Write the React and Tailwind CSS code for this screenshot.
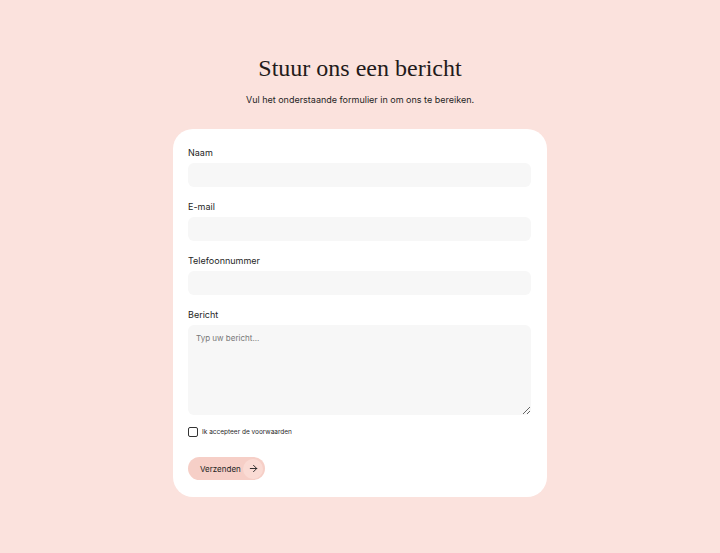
import React from "react";

const Field = ({ label, children }) => (
  <div className="flex flex-col gap-[4px]">
    <label className="text-[9px] leading-[12px] text-[#1f1f1f]">{label}</label>
    {children}
  </div>
);

export default function App() {
  return (
    <div
      className="min-h-[553px] w-full bg-[#fbe2dd] flex flex-col items-center pt-[52px]"
      style={{ fontFamily: "Inter, 'Liberation Sans', sans-serif" }}
    >
      <h1
        className="text-[24px] leading-[32px] text-[#231a1a]"
        style={{ fontFamily: "'Liberation Serif', serif" }}
      >
        Stuur ons een bericht
      </h1>
      <p className="mt-[9px] text-[9px] leading-[14px] text-[#1f1f1f]">
        Vul het onderstaande formulier in om ons te bereiken.
      </p>

      <form className="mt-[22px] w-[374px] bg-white rounded-[20px] pl-[15px] pr-[16px] pt-[18px] pb-[17px] flex flex-col">
        <div className="flex flex-col gap-[14px]">
          <Field label="Naam">
            <input className="h-[24px] rounded-[6px] bg-[#f7f7f7] outline-none px-2 text-[9px]" />
          </Field>
          <Field label="E-mail">
            <input className="h-[24px] rounded-[6px] bg-[#f7f7f7] outline-none px-2 text-[9px]" />
          </Field>
          <Field label="Telefoonnummer">
            <input className="h-[24px] rounded-[6px] bg-[#f7f7f7] outline-none px-2 text-[9px]" />
          </Field>
          <Field label="Bericht">
            <textarea
              placeholder="Typ uw bericht..."
              className="h-[90px] rounded-[6px] bg-[#f7f7f7] outline-none px-2 py-[8px] text-[8px] leading-[11px] placeholder:text-[#777]"
            />
          </Field>
        </div>

        <label className="mt-[12px] flex items-center gap-[4px] text-[6.5px] leading-[10px] text-[#1f1f1f]">
          <span className="w-[10px] h-[10px] rounded-[2px] border border-[#333] bg-white" />
          Ik accepteer de voorwaarden
        </label>

        <button
          type="button"
          className="mt-[20px] self-start h-[23px] w-[77px] rounded-full bg-[#f6cfc7] flex items-center pl-[12px] pr-[2px] justify-between text-[8px] text-[#1f1f1f]"
        >
          Verzenden
          <span className="w-[20px] h-[20px] rounded-full bg-[#fadbd4] flex items-center justify-center">
            <svg width="11" height="11" viewBox="0 0 24 24" fill="none" stroke="#222" strokeWidth="2" strokeLinecap="round" strokeLinejoin="round">
              <path d="M5 12h14" />
              <path d="m12 5 7 7-7 7" />
            </svg>
          </span>
        </button>
      </form>
    </div>
  );
}
